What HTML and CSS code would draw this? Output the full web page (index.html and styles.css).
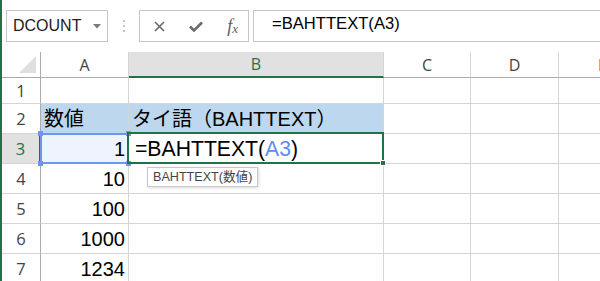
FILE: index.html
```html
<!DOCTYPE html>
<html lang="ja">
<head>
  <meta charset="UTF-8" />
  <title>BAHTTEXT</title>
  <link rel="stylesheet" href="styles.css">
</head>
<body>
  <div class="toolbar">
    <div class="name-box">
      <span>DCOUNT</span>
      <svg class="arrow" width="8" height="5" viewBox="0 0 8 5"><path d="M0 0h8L4 4.5z" fill="#7a7a7a"/></svg>
    </div>
    <svg class="dots" width="4" height="12" viewBox="0 0 4 12">
      <rect x="1" y="0" width="2" height="2" fill="#c4c4c4"/>
      <rect x="1" y="5" width="2" height="2" fill="#c4c4c4"/>
      <rect x="1" y="10" width="2" height="2" fill="#c4c4c4"/>
    </svg>
    <div class="fx-box">
      <svg width="11" height="11" viewBox="0 0 11 11"><path d="M1 1l9 9M10 1l-9 9" stroke="#6a6a6a" stroke-width="1.6"/></svg>
      <svg width="14" height="11" viewBox="0 0 14 11"><path d="M1 5.5l4 4L13 1.5" stroke="#6a6a6a" stroke-width="2.6" fill="none"/></svg>
      <span class="fx">f<sub>x</sub></span>
    </div>
    <div class="formula-box">=BAHTTEXT(A3)</div>
  </div>

  <div class="sheet">
    <div class="corner"></div>
    <div class="col-head">A</div>
    <div class="col-head active">B</div>
    <div class="col-head">C</div>
    <div class="col-head">D</div>
    <div class="col-head">E</div>

    <div class="row-head">1</div>
    <div class="cell"></div><div class="cell"></div><div class="cell"></div><div class="cell"></div><div class="cell"></div>

    <div class="row-head">2</div>
    <div class="cell fill">数値</div>
    <div class="cell fill">タイ語（BAHTTEXT）</div>
    <div class="cell"></div><div class="cell"></div><div class="cell"></div>

    <div class="row-head active">3</div>
    <div class="cell num ref">1
      <span class="handle tl"></span><span class="handle tr"></span>
      <span class="handle bl"></span><span class="handle br"></span>
    </div>
    <div class="cell editing">=BAHTTEXT(<span class="ref-text">A3</span>)
      <span class="fill-handle"></span>
      <div class="tip">BAHTTEXT(数値)</div>
    </div>
    <div class="cell"></div><div class="cell"></div><div class="cell"></div>

    <div class="row-head">4</div>
    <div class="cell num">10</div>
    <div class="cell"></div><div class="cell"></div><div class="cell"></div><div class="cell"></div>

    <div class="row-head">5</div>
    <div class="cell num">100</div>
    <div class="cell"></div><div class="cell"></div><div class="cell"></div><div class="cell"></div>

    <div class="row-head">6</div>
    <div class="cell num">1000</div>
    <div class="cell"></div><div class="cell"></div><div class="cell"></div><div class="cell"></div>

    <div class="row-head">7</div>
    <div class="cell num">1234</div>
    <div class="cell"></div><div class="cell"></div><div class="cell"></div><div class="cell"></div>
  </div>
</body>
</html>
```

FILE: styles.css
```css
:root {
  --green: #217346;
  --grid: #d4d4d4;
  --head-line: #ababab;
  --head-bg: #e1e1e1;
  --text: #000;
  --muted: #444;
  --cell-font: "Liberation Sans", "Noto Sans CJK JP", sans-serif;
  --ui-font: "Open Sans", "Liberation Sans", sans-serif;
}

* {
  margin: 0;
  padding: 0;
  box-sizing: border-box;
}

body {
  width: 600px;
  height: 281px;
  overflow: hidden;
  border-left: 2px solid var(--green);
  background: #fff;
  font-family: var(--cell-font);
  color: var(--text);
}

/* formula bar */
.toolbar {
  height: 52px;
  display: flex;
  align-items: flex-start;
  padding: 10px 0 0 4px;
}

.name-box {
  width: 102px;
  height: 32px;
  border: 1px solid #c6c6c6;
  display: flex;
  align-items: center;
  justify-content: space-between;
  padding: 0 6px 0 6px;
  font-size: 16px;
  color: #222;
}

.name-box .arrow {
  margin-top: 1px;
}

.dots {
  margin: 10px 13px 0 14px;
}

.fx-box {
  width: 110px;
  height: 32px;
  border: 1px solid #c6c6c6;
  display: flex;
  align-items: center;
  justify-content: space-between;
  padding: 0 10px 0 14px;
}

.fx {
  font-family: "Liberation Serif", serif;
  font-style: italic;
  font-size: 18px;
  color: #5e5e5e;
}

.fx sub {
  font-size: 13px;
  vertical-align: -1px;
}

.formula-box {
  flex: 1;
  height: 32px;
  margin-left: 4px;
  border: 1px solid #c6c6c6;
  border-right: none;
  padding: 3px 0 0 18px;
  font-size: 16.6px;
}

/* grid */
.sheet {
  display: grid;
  grid-template-columns: 39px 88px 255px 87px 88px 88px;
  grid-template-rows: 26px 26px repeat(6, 30px);
}

.corner {
  border-right: 1px solid var(--head-line);
  border-bottom: 1px solid var(--head-line);
  position: relative;
}

.corner::after {
  content: "";
  position: absolute;
  right: 4px;
  bottom: 4px;
  border-style: solid;
  border-width: 0 0 17px 17px;
  border-color: transparent transparent #dfdfdf transparent;
}

.col-head {
  border-right: 1px solid var(--grid);
  border-bottom: 1px solid var(--head-line);
  display: flex;
  align-items: center;
  justify-content: center;
  font-family: var(--ui-font);
  font-size: 16px;
  color: var(--muted);
}

.col-head.active {
  background: var(--head-bg);
  color: var(--green);
  border-bottom: 2px solid var(--green);
}

.row-head {
  border-right: 1px solid var(--head-line);
  border-bottom: 1px solid var(--grid);
  display: flex;
  align-items: center;
  justify-content: center;
  font-family: var(--ui-font);
  font-size: 16.5px;
  color: var(--muted);
}

.row-head.active {
  background: var(--head-bg);
  color: var(--green);
  border-right: 2px solid var(--green);
}

.cell {
  border-right: 1px solid var(--grid);
  border-bottom: 1px solid var(--grid);
  display: flex;
  align-items: flex-end;
  padding: 0 3px 1px 3px;
  font-size: 20px;
  line-height: 26px;
  white-space: nowrap;
  position: relative;
}

.cell.fill {
  background: #bdd7ee;
}

.cell.num {
  justify-content: flex-end;
}

/* referenced cell */
.cell.ref {
  background: #eef3fd;
}

.cell.ref::after {
  content: "";
  position: absolute;
  inset: -1px -1px -1px -1px;
  border: 2px solid #6e95f2;
}

.handle {
  position: absolute;
  width: 5px;
  height: 5px;
  background: #6e95f2;
  z-index: 2;
}

.handle.tl { left: -3px; top: -3px; }
.handle.tr { right: -3px; top: -3px; }
.handle.bl { left: -3px; bottom: -3px; }
.handle.br { right: -3px; bottom: -3px; }

/* active cell */
.cell.editing {
  padding-left: 6px;
  font-size: 21.2px;
  z-index: 3;
}

.cell.editing::after {
  content: "";
  position: absolute;
  inset: -2px -1px -1px -2px;
  border: 2px solid var(--green);
}

.ref-text {
  color: #5b8ef0;
}

.fill-handle {
  position: absolute;
  right: -3px;
  bottom: -3px;
  width: 6px;
  height: 6px;
  background: var(--green);
  border: 1px solid #fff;
  z-index: 2;
}

.tip {
  position: absolute;
  left: 18px;
  top: 33px;
  height: 20px;
  padding: 0 5px;
  border: 1px solid #c8c8c8;
  background: #fff;
  box-shadow: 1px 1px 3px rgba(0, 0, 0, 0.15);
  font-size: 12.6px;
  line-height: 18px;
  color: #444;
}
```
